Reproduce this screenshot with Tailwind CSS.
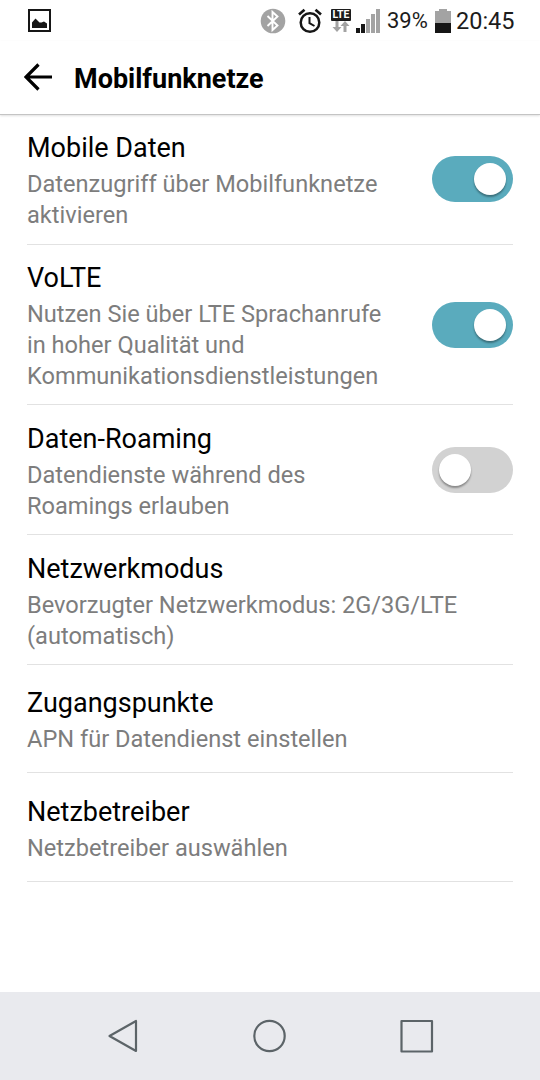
<!DOCTYPE html>
<html lang="de">
<head>
    <meta charset="UTF-8">
    <meta name="viewport" content="width=device-width, initial-scale=1.0">
    <title>Mobilfunknetze</title>
    <script src="https://cdn.jsdelivr.net/npm/@tailwindcss/browser@4"></script>
</head>
<body class="bg-white font-['Roboto',sans-serif] text-black">
    <div class="flex h-[1080px] w-[540px] flex-col overflow-hidden">
        <!-- Status bar -->
        <div class="flex h-[41px] shrink-0 items-center pl-7 pr-[25px] text-[#1c1c1c]">
            <svg class="h-[23px] w-[23px]" viewBox="0 0 23 23">
                <rect x="1" y="1" width="21" height="21" fill="none" stroke="#161616" stroke-width="2"/>
                <path d="M4 19v-5.500L7.500 9.500 11.500 13.500h2l2.500-1 3 2V19z" fill="#161616"/>
            </svg>
            <svg class="ml-[209px] h-[26px] w-[26px] shrink-0" viewBox="0 0 26 26">
                <circle cx="13" cy="13" r="12.300" fill="#a3a3a3"/>
                <path d="M7.500 8l10 9.500-5 4.500V4l5 4.500-10 9.500" fill="none" stroke="#fff" stroke-width="1.900"/>
            </svg>
            <svg class="ml-[11px] h-[26px] w-[26px] shrink-0" viewBox="0 0 26 26" fill="none" stroke="#161616">
                <circle cx="13" cy="14.500" r="9.300" stroke-width="2.500"/>
                <path d="M12.500 9v6.200l5 2.800" stroke-width="2"/>
                <path d="M2 6.500l5.500-4.700M24 6.500l-5.500-4.700" stroke-width="2.700"/>
            </svg>
            <!-- LTE badge with data arrows -->
            <div class="ml-2 flex h-[23px] w-5 shrink-0 flex-col items-center">
                <div class="h-3 w-5 rounded-[1px] bg-[#1c1c1c] text-center text-[10.5px]/[12px] font-bold text-white">LTE</div>
                <svg class="h-[11px] w-5" viewBox="0 0 20 11" fill="#a3a3a3">
                    <path d="M4.500 0h3v6h3L6 11 1.500 6h3zM12.500 11h3V5h3L14 0 9.500 5h3z"/>
                </svg>
            </div>
            <svg class="ml-[5px] h-6 w-6 shrink-0" viewBox="0 0 24 24">
                <path d="M0 19h4v5H0zM5 15h4v9H5z" fill="#161616"/>
                <path d="M10 10h4v14h-4zM15 5h4v19h-4zM20 0h4v24h-4z" fill="#a3a3a3"/>
            </svg>
            <span class="ml-[7px] w-[41px] shrink-0 pt-px text-[22px]/[26px]">39%</span>
            <svg class="ml-[7px] h-6 w-4 shrink-0" viewBox="0 0 16 24">
                <path d="M4 0h8v2h4v12H0V2h4z" fill="#a3a3a3"/>
                <path d="M0 14h16v10H0z" fill="#161616"/>
            </svg>
            <span class="ml-[5px] shrink-0 pt-px text-[23.500px]/[26px]">20:45</span>
        </div>

        <!-- Title bar -->
        <header class="flex h-[74px] shrink-0 items-center border-b border-[#c4c4c4] pl-6 shadow-[0_1px_2px_rgba(0,0,0,0.12)]">
            <svg class="-mt-[2px] h-7 w-7" viewBox="0 0 28 28" fill="none" stroke="#000" stroke-width="3.200">
                <path d="M14.500 1.500L2 14l12.500 12.500M2 14h26"/>
            </svg>
            <h1 class="ml-[22px] pt-[2px] text-[27px]/8 font-bold">Mobilfunknetze</h1>
        </header>

        <!-- Settings list -->
        <main class="flex-1 px-[27px]">
            <div class="flex h-[130px] items-center justify-between border-b border-[#e2e2e2] pb-[2px]">
                <div class="w-[380px]">
                    <h2 class="pt-[3px] text-[27px]/9">Mobile Daten</h2>
                    <p class="pt-[3px] text-[23.6px]/[31px] text-[#7d7d7d]">Datenzugriff über Mobilfunknetze aktivieren</p>
                </div>
                <div class="flex h-[46px] w-[81px] shrink-0 items-center justify-end rounded-full bg-[#5aabbd] px-[7px]">
                    <div class="h-8 w-8 rounded-full bg-white shadow-[0_2px_2px_rgba(0,0,0,0.35)]"></div>
                </div>
            </div>
            <div class="flex h-[160px] items-center justify-between border-b border-[#e2e2e2]">
                <div class="w-[380px]">
                    <h2 class="pt-[3px] text-[27px]/9">VoLTE</h2>
                    <p class="pt-[3px] text-[23.6px]/[31px] text-[#7d7d7d]">Nutzen Sie über LTE Sprachanrufe<br>in hoher Qualität und<br>Kommunikationsdienstleistungen</p>
                </div>
                <div class="flex h-[46px] w-[81px] shrink-0 items-center justify-end rounded-full bg-[#5aabbd] px-[7px]">
                    <div class="h-8 w-8 rounded-full bg-white shadow-[0_2px_2px_rgba(0,0,0,0.35)]"></div>
                </div>
            </div>
            <div class="flex h-[130px] items-center justify-between border-b border-[#e2e2e2]">
                <div class="w-[380px]">
                    <h2 class="pt-[3px] text-[27px]/9">Daten-Roaming</h2>
                    <p class="pt-[3px] text-[23.6px]/[31px] text-[#7d7d7d]">Datendienste während des<br>Roamings erlauben</p>
                </div>
                <div class="flex h-[46px] w-[81px] shrink-0 items-center rounded-full bg-[#d2d2d2] px-[7px]">
                    <div class="h-8 w-8 rounded-full bg-white shadow-[0_2px_2px_rgba(0,0,0,0.35)]"></div>
                </div>
            </div>
            <div class="flex h-[130px] flex-col justify-center border-b border-[#e2e2e2]">
                <h2 class="pt-[3px] text-[27px]/9">Netzwerkmodus</h2>
                <p class="pt-[3px] text-[23.6px]/[31px] text-[#7d7d7d]">Bevorzugter Netzwerkmodus: 2G/3G/LTE<br>(automatisch)</p>
            </div>
            <div class="flex h-[108px] flex-col justify-center border-b border-[#e2e2e2]">
                <h2 class="pt-[3px] text-[27px]/9">Zugangspunkte</h2>
                <p class="pt-[3px] text-[23.6px]/[31px] text-[#7d7d7d]">APN für Datendienst einstellen</p>
            </div>
            <div class="flex h-[109px] flex-col justify-center border-b border-[#e2e2e2]">
                <h2 class="pt-[3px] text-[27px]/9">Netzbetreiber</h2>
                <p class="pt-[3px] text-[23.6px]/[31px] text-[#7d7d7d]">Netzbetreiber auswählen</p>
            </div>
        </main>

        <!-- Navigation bar -->
        <nav class="flex h-[88px] shrink-0 items-center bg-[#e9eaee] pl-[107px]">
            <svg class="h-9 w-[327px]" viewBox="0 0 327 36" fill="none" stroke="#5c6468" stroke-width="2.200" stroke-linejoin="round">
                <path d="M29 3v30L2.500 18z"/>
                <circle cx="162.500" cy="18" r="15.200"/>
                <rect x="294.500" y="3" width="30.500" height="30.500"/>
            </svg>
        </nav>
    </div>
</body>
</html>
